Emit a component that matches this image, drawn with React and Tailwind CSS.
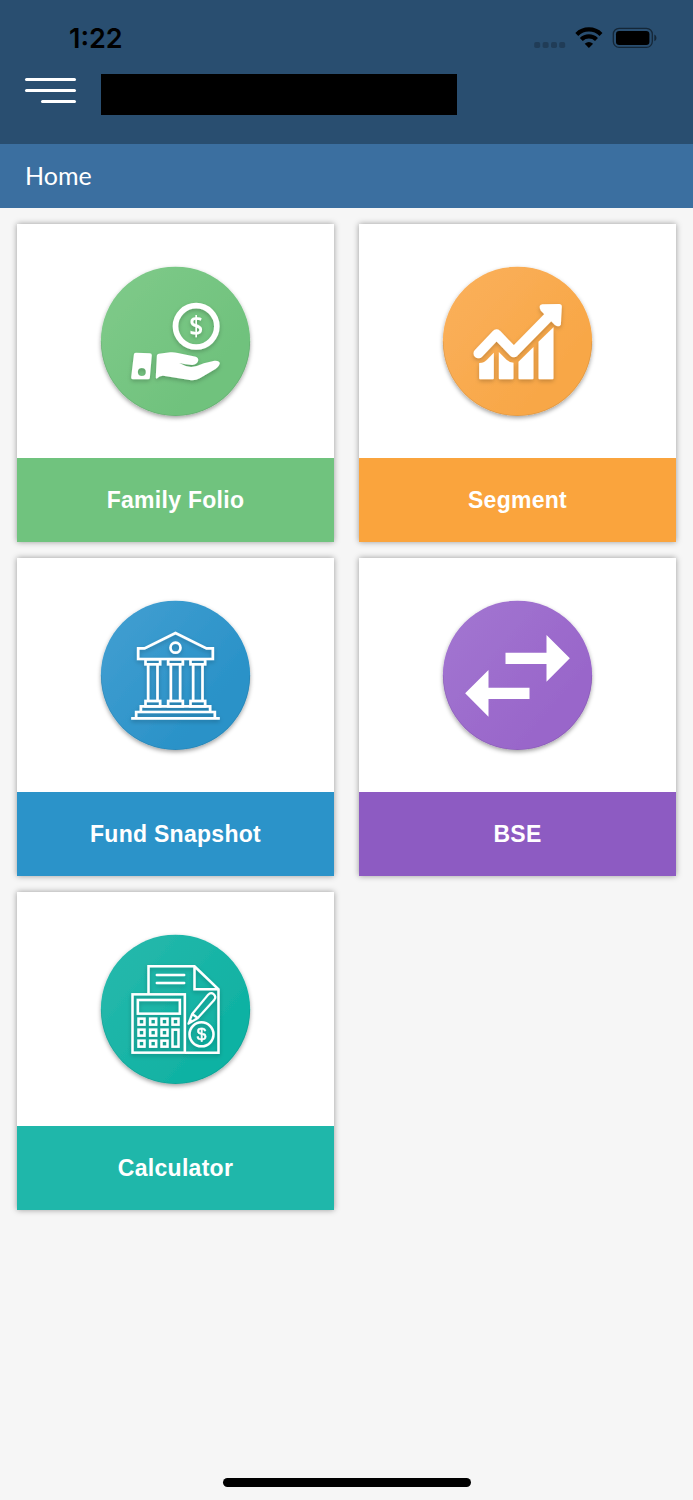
import React from "react";

function FolioIcon() {
  return (
    <>
      <circle cx="319" cy="213" r="62" fill="none" stroke="#fff" strokeWidth="17" />
      <text x="319" y="241" textAnchor="middle" fontFamily="'Open Sans', sans-serif" fontWeight="600" fontSize="82" fill="#fff" textLength="42" lengthAdjust="spacingAndGlyphs">$</text>
      <path fillRule="evenodd" d="M138 292L180 294Q186 294 186 300L180 367Q180 372 174 372L129 372Q123 372 124 366L132 298Q132 292 138 292ZM156 338A12 12 0 1 0 156 362A12 12 0 1 0 156 338Z" />
      <path d="M201 301Q201 296 207 295L241 291Q252 290 264 293L318 304Q327 308 325 316Q323 326 307 329Q286 328 268 323Q285 333 304 335Q324 333 342 324L374 316Q389 315 390 324Q389 332 377 341L330 369Q318 376 304 375L220 361Q211 360 200 370Q197 369 198 361Z" />
    </>
  );
}

function SegmentIcon() {
  return (
    <>
      <path d="M147 294L201 237L253 291L356 186" fill="none" stroke="#fff" strokeWidth="30" strokeLinecap="round" strokeLinejoin="round" />
      <path d="M338 147L389 146Q397 146 397 154L394 208Q388 217 376 209L334 166Q325 150 338 147Z" />
      <path d="M149 323Q164 324 174 312L193 292V369Q193 372 190 372H152Q149 372 149 369Z" />
      <path d="M208 290L231 313Q241 322 252 322V369Q252 372 249 372H211Q208 372 208 369Z" />
      <path d="M267 319L312 275V369Q312 372 309 372H270Q267 372 267 369Z" />
      <path d="M327 259L372 216V369Q372 372 369 372H330Q327 372 327 369Z" />
    </>
  );
}

function FundIcon() {
  return (
    <g fill="none" stroke="#fff" strokeWidth="8">
      <path d="M145 206V174H164L257 128L350 174H369V206Z" />
      <circle cx="257" cy="172" r="15" />
      {[189, 257, 324].map((x) => (
        <React.Fragment key={x}>
          <rect x={x - 22} y="207" width="44" height="15" />
          <path d={`M${x - 14} 222V332M${x + 14} 222V332`} />
          <rect x={x - 22} y="332" width="44" height="16" />
        </React.Fragment>
      ))}
      <path d="M153 365V348H361V365M139 383V365H375V383M124 384H390" />
    </g>
  );
}

function BseIcon() {
  return (
    <>
      <path d="M228 187H351V134L421 204L351 274V221H228Z" />
      <path d="M300 292H177V239L107 309L177 379V326H300Z" />
    </>
  );
}

function CalculatorIcon() {
  const keys = [];
  for (const y of [289, 322, 355]) {
    for (const x of [155, 190, 224]) keys.push([x, y]);
  }
  keys.push([257, 289]);
  return (
    <g fill="none" stroke="#fff" strokeWidth="7.5">
      <path d="M176 207V123H314L386 192V382H285M314 123V192H386" />
      <path d="M201 149H283M201 173H283" strokeLinecap="round" />
      <rect x="128" y="207" width="157" height="175" />
      <rect x="144" y="224" width="126" height="41" />
      {keys.map(([x, y]) => (
        <rect key={`${x}-${y}`} x={x - 9} y={y - 9} width="18" height="18" />
      ))}
      <rect x="248" y="313" width="18" height="51" />
      <path d="M296 295L307 266L355 208Q363 200 372 207Q380 214 373 224L324 278ZM307 266L324 278M296 295L305 283" strokeWidth="6.5" strokeLinejoin="round" />
      <circle cx="335" cy="327" r="36" />
      <text x="335" y="345" textAnchor="middle" fontFamily="'Liberation Sans', sans-serif" fontSize="52" fill="#fff" strokeWidth="1.5">$</text>
    </g>
  );
}

const cards = [
  { id: "folio", label: "Family Folio", Icon: FolioIcon, cx: 257, cy: 258, from: "#7dc988", to: "#70c27d", bar: "bg-[#70c37e]" },
  { id: "segment", label: "Segment", Icon: SegmentIcon, cx: 264, cy: 258, from: "#faaf59", to: "#f8a747", bar: "bg-[#faa43d]" },
  { id: "fund", label: "Fund Snapshot", Icon: FundIcon, cx: 257, cy: 255, from: "#3f9dd0", to: "#2a92c8", bar: "bg-[#2b93c9]" },
  { id: "bse", label: "BSE", Icon: BseIcon, cx: 264, cy: 255, from: "#a174d0", to: "#9966ca", bar: "bg-[#8d5bc2]" },
  { id: "calculator", label: "Calculator", Icon: CalculatorIcon, cx: 257, cy: 252, from: "#25b8ab", to: "#10b2a3", bar: "bg-[#1fb7aa]" },
];

function Card({ id, label, Icon, cx, cy, from, to, bar }) {
  return (
    <div className="flex h-[318px] flex-col bg-white shadow-[0_0_6px_rgba(0,0,0,0.38)]">
      <div className="flex h-[234px] items-center justify-center">
        <svg className="h-44 w-[175px] overflow-visible" viewBox={`${cx - 262.5} ${cy - 265} 525 528`}>
          <defs>
            <linearGradient id={`${id}-fill`} x1="0.1" y1="0.15" x2="0.75" y2="0.7">
              <stop offset="0" stopColor={from} />
              <stop offset="1" stopColor={to} />
            </linearGradient>
            <filter id={`${id}-shadow`} x="-20%" y="-20%" width="140%" height="150%">
              <feDropShadow dx="0" dy="6" stdDeviation="6" floodColor="#000" floodOpacity="0.36" />
            </filter>
            <filter id={`${id}-glyph`} x="-20%" y="-20%" width="140%" height="150%">
              <feDropShadow dx="0" dy="6" stdDeviation="6" floodColor="#000" floodOpacity={id === "bse" ? 0 : 0.22} />
            </filter>
          </defs>
          <circle cx={cx} cy={cy} r="224" fill={`url(#${id}-fill)`} filter={`url(#${id}-shadow)`} />
          <path d={`M${cx - 223} ${cy}A223 223 0 0 0 ${cx + 223} ${cy}`} fill="none" stroke="#000" strokeOpacity="0.13" strokeWidth="2" />
          <g fill="#fff" filter={`url(#${id}-glyph)`}>
            <Icon />
          </g>
        </svg>
      </div>
      <div className={`flex h-[84px] items-center justify-center text-[23px] font-bold tracking-[0.28px] text-white ${bar}`}>
        {label}
      </div>
    </div>
  );
}

export default function App() {
  return (
    <div className="flex h-[1500px] w-[693px] flex-col bg-[#f6f6f6] font-['Liberation_Sans',Arial,sans-serif]">
      <header className="h-36 bg-[#294e70]">
        <div className="flex h-[74px] items-start justify-between pr-9 pl-[69px]">
          <span className="pt-[23px] font-['Inter',sans-serif] text-[27px] leading-8 font-semibold text-black">1:22</span>
          <svg className="mt-6 h-[28px] w-[125px]" viewBox="0 0 125 28">
            <g fill="#000" fillOpacity="0.22">
              <rect x="2.2" y="18" width="6" height="6" rx="1.7" />
              <rect x="10.6" y="18" width="6" height="6" rx="1.7" />
              <rect x="19" y="18" width="6" height="6" rx="1.7" />
              <rect x="27.2" y="18" width="6" height="6" rx="1.7" />
            </g>
            <g fill="none" stroke="#000" strokeWidth="4.2">
              <path d="M44.8 10.4A17.3 17.3 0 0 1 69 10.4" />
              <path d="M49.3 15.4A10.9 10.9 0 0 1 64.5 15.4" />
            </g>
            <path d="M56.9 24L52.7 19.7Q56.9 16.3 61.1 19.7Z" />
            <rect x="81.3" y="4.3" width="39" height="19" rx="5.8" fill="none" stroke="#000" strokeOpacity="0.5" strokeWidth="1.3" />
            <rect x="84" y="7" width="33.4" height="14" rx="3.2" />
            <path d="M122.3 10.6Q124.5 11.4 124.5 13.9Q124.5 16.4 122.3 17.2Z" fillOpacity="0.5" />
          </svg>
        </div>
        <div className="flex pl-[25px]">
          <div className="flex w-[51px] flex-col items-end gap-[7.5px] pt-[3.7px]">
            <span className="h-[3.5px] w-full rounded-full bg-white" />
            <span className="h-[3.5px] w-full rounded-full bg-white" />
            <span className="h-[3.5px] w-[35px] rounded-full bg-white" />
          </div>
          <div className="ml-[25px] h-[41px] w-[356px] bg-black" />
        </div>
      </header>
      <nav className="flex h-16 items-center bg-[#3b6fa0] pb-px pl-[25px] font-['Lato',sans-serif] text-[25px] text-white">Home</nav>
      <main className="grid grid-cols-[317px_317px] gap-x-[25px] gap-y-4 pt-4 pl-[17px]">
        {cards.map((card) => (
          <Card key={card.id} {...card} />
        ))}
      </main>
      <div className="mx-auto mt-auto mb-[13.5px] h-[8.5px] w-[248px] rounded-full bg-black" />
    </div>
  );
}
